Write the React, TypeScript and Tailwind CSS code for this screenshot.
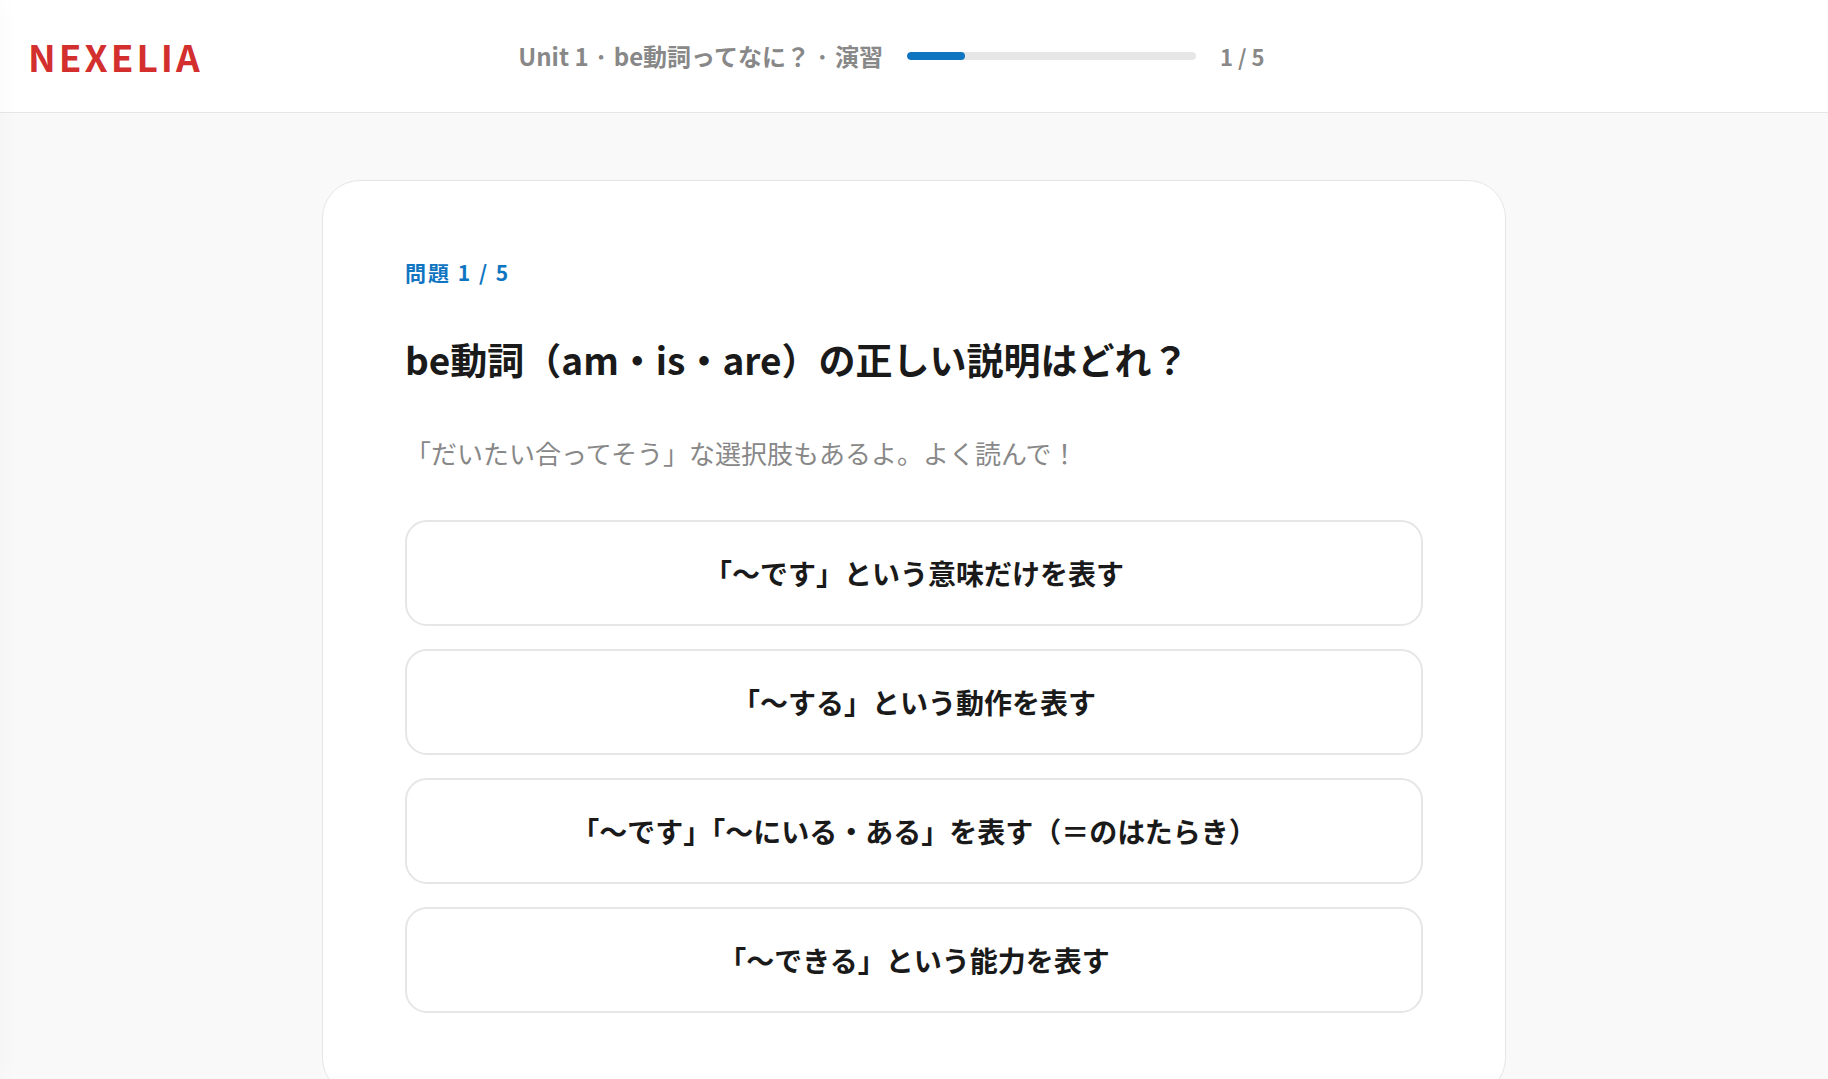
import { useState } from "react";

const TOTAL = 5;

const choices = [
  "「〜です」という意味だけを表す",
  "「〜する」という動作を表す",
  "「〜です」「〜にいる・ある」を表す（＝のはたらき）",
  "「〜できる」という能力を表す",
];

const Header = ({ current }: { current: number }) => (
  <header className="flex h-[113px] items-center justify-between border-b border-[#e6e6e6] bg-white px-7">
    <a
      href="#"
      className="text-[37px] leading-none font-bold tracking-[3px] text-[#d32f2f]"
    >
      NEXELIA
    </a>
    <div className="flex items-center gap-6 font-bold text-[#888888]">
      <span className="text-[24px]">Unit 1 · be動詞ってなに？ · 演習</span>
      <div
        role="progressbar"
        aria-label="進捗"
        aria-valuenow={current}
        aria-valuemax={TOTAL}
        className="h-2 w-[289px] overflow-hidden rounded-full bg-[#e6e6e6]"
      >
        <div
          className="h-full rounded-full bg-[#0f75c1]"
          style={{ width: `${(current / TOTAL) * 100}%` }}
        />
      </div>
      <span className="text-[22px]">
        {current} / {TOTAL}
      </span>
    </div>
    <div className="w-[220px]" />
  </header>
);

export default function App() {
  const [current] = useState(1);
  const [selected, setSelected] = useState<number | null>(null);

  return (
    <div
      lang="ja"
      className="min-h-screen bg-[#f9f9f9] font-['Noto_Sans_CJK_JP',sans-serif] text-[#1a1a1a]"
    >
      {/* closed side drawer, only its shadow reaches the page */}
      <aside
        aria-hidden="true"
        className="pointer-events-none fixed inset-y-0 -left-10 z-10 w-10 shadow-[0_0_24px_rgba(0,0,0,0.03)]"
      />
      <Header current={current} />
      <main className="px-6 pt-[67px] pb-16">
        <section className="mx-auto max-w-[1184px] rounded-[38px] border border-[#e6e6e6] bg-white px-[82px] pt-[73px] pb-[82px]">
          <p className="text-[21px] leading-9 font-bold tracking-[2px] text-[#0f75c1]">
            問題 {current} / {TOTAL}
          </p>
          <h1 className="mt-10 text-[37px] leading-[58px] font-bold">
            be動詞（am・is・are）の正しい説明はどれ？
          </h1>
          <p className="mt-10 text-[26px] leading-[50px] text-[#888888]">
            「だいたい合ってそう」な選択肢もあるよ。よく読んで！
          </p>
          <div className="mt-[42px] flex flex-col gap-[23px]">
            {choices.map((choice, i) => (
              <button
                key={choice}
                type="button"
                aria-pressed={selected === i}
                onClick={() => setSelected(i)}
                className="h-[106px] cursor-pointer rounded-[22px] border-2 border-[#e6e6e6] bg-white px-8 text-[28px] font-bold hover:border-[#0f75c1]"
              >
                {choice}
              </button>
            ))}
          </div>
        </section>
      </main>
    </div>
  );
}
